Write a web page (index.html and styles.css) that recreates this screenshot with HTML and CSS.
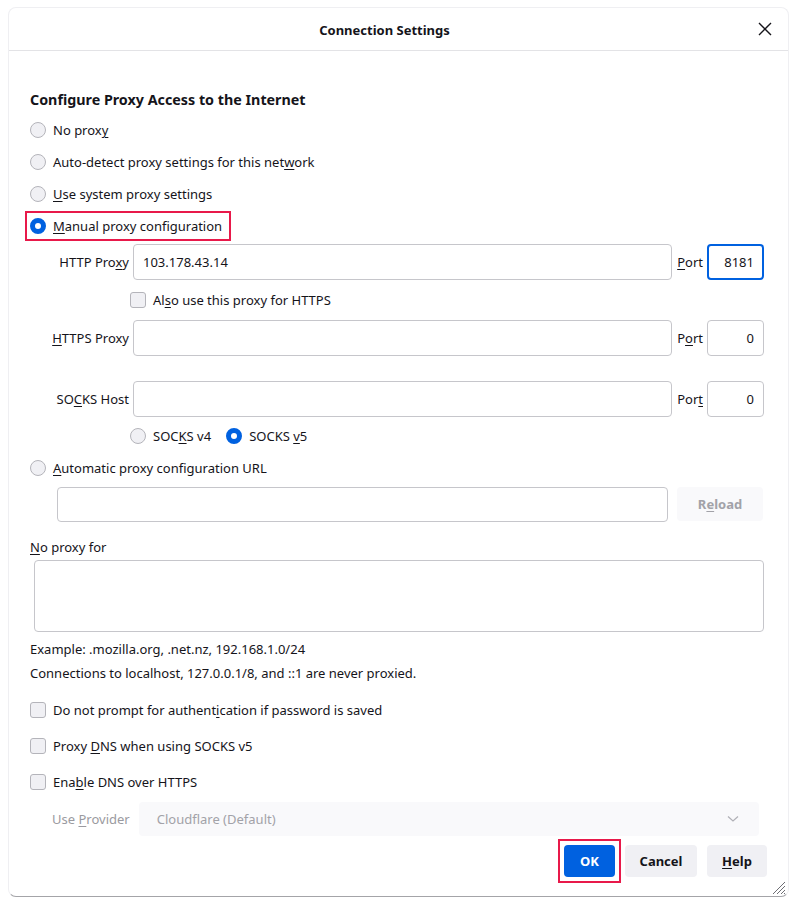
FILE: index.html
```html
<!DOCTYPE html>
<html lang="en">
<head>
    <meta charset="UTF-8">
    <meta name="viewport" content="width=device-width, initial-scale=1.0">
    <title>Connection Settings</title>
    <link rel="stylesheet" href="styles.css">
</head>
<body>

<div class="dialog">
    <!-- Title bar -->
    <div class="dialog-header">
        <div class="dialog-title">Connection Settings</div>
        <button class="close-button" aria-label="Close">
            <svg width="14" height="14" viewBox="0 0 14 14">
                <path d="M1 1L13 13M13 1L1 13" stroke="#15141a" stroke-width="1.4" fill="none"/>
            </svg>
        </button>
    </div>

    <div class="dialog-body">
        <h2>Configure Proxy Access to the Internet</h2>

        <div class="radio-list">
            <label class="option"><span class="radio"></span><span>No prox<u>y</u></span></label>
            <label class="option"><span class="radio"></span><span>Auto-detect proxy settings for this net<u>w</u>ork</span></label>
            <label class="option"><span class="radio"></span><span><u>U</u>se system proxy settings</span></label>
            <div class="option-row">
                <label class="option highlight"><span class="radio checked"></span><span><u>M</u>anual proxy configuration</span></label>
            </div>
        </div>

        <!-- Manual proxy fields -->
        <div class="proxy-grid">
            <label class="field-label">HTTP Pro<u>x</u>y</label>
            <input class="text-input" type="text" value="103.178.43.14">
            <label class="port-label"><u>P</u>ort</label>
            <input class="port-input focused" type="text" value="8181">

            <div class="check-cell">
                <label class="option"><span class="checkbox"></span><span>Al<u>s</u>o use this proxy for HTTPS</span></label>
            </div>

            <label class="field-label"><u>H</u>TTPS Proxy</label>
            <input class="text-input" type="text">
            <label class="port-label">P<u>o</u>rt</label>
            <input class="port-input" type="text" value="0">

            <div class="grid-spacer"></div>

            <label class="field-label">SO<u>C</u>KS Host</label>
            <input class="text-input" type="text">
            <label class="port-label">Por<u>t</u></label>
            <input class="port-input" type="text" value="0">

            <div class="socks-cell">
                <label class="option"><span class="radio"></span><span>SOC<u>K</u>S v4</span></label>
                <label class="option"><span class="radio checked"></span><span>SOCKS <u>v</u>5</span></label>
            </div>
        </div>

        <label class="option auto-option"><span class="radio"></span><span><u>A</u>utomatic proxy configuration URL</span></label>
        <div class="url-row">
            <input class="text-input" type="text">
            <button class="reload-button" disabled>R<u>e</u>load</button>
        </div>

        <div class="plain-line no-proxy-label"><u>N</u>o proxy for</div>
        <textarea class="no-proxy-area"></textarea>
        <div class="plain-line example">Example: .mozilla.org, .net.nz, 192.168.1.0/24</div>
        <div class="plain-line note">Connections to localhost, 127.0.0.1/8, and ::1 are never proxied.</div>

        <div class="check-list">
            <label class="option"><span class="checkbox"></span><span>Do not prompt for authent<u>i</u>cation if password is saved</span></label>
            <label class="option"><span class="checkbox"></span><span>Proxy <u>D</u>NS when using SOCKS v5</span></label>
            <label class="option"><span class="checkbox"></span><span>Ena<u>b</u>le DNS over HTTPS</span></label>
        </div>

        <div class="provider-row">
            <span class="provider-label">Use <u>P</u>rovider</span>
            <div class="select-box">
                <span>Cloudflare (Default)</span>
                <svg width="12" height="8" viewBox="0 0 12 8">
                    <path d="M1 1.5L6 6L11 1.5" stroke="#b0b0b6" stroke-width="1.2" fill="none"/>
                </svg>
            </div>
        </div>

        <div class="button-row">
            <div class="ok-wrap"><button class="btn primary">OK</button></div>
            <button class="btn cancel">Cancel</button>
            <button class="btn help"><u>H</u>elp</button>
        </div>
    </div>

    <svg class="grip" width="16" height="16" viewBox="0 0 16 16">
        <path d="M15 3L3 15M15 7L7 15M15 11L11 15M15 14L14 15" stroke="#6e6e74" stroke-width="1" fill="none"/>
    </svg>
</div>

</body>
</html>
```

FILE: styles.css
```css
body {
    font-family: "Noto Sans", "Open Sans", sans-serif;
    font-size: 13px;
    color: #15141a;
    background-color: #fff;
    margin: 0;
    padding: 0;
}
u {
    text-decoration-thickness: 1px;
    text-underline-offset: 2px;
}
.dialog {
    position: relative;
    width: 779px;
    height: 888px;
    margin: 7px 0 0 8px;
    border: 1px solid #efeff2;
    border-bottom-color: #a4a4a8;
    border-radius: 8px;
    display: flex;
    flex-direction: column;
}
.dialog-header {
    display: flex;
    align-items: center;
    height: 42px;
    border-bottom: 1px solid #e3e3e6;
}
.dialog-title {
    flex: 1;
    text-align: center;
    font-weight: bold;
    font-size: 13px;
    padding-left: 2px;
    padding-top: 2px;
}
.close-button {
    width: 30px;
    height: 30px;
    margin-right: 0;
    padding: 0;
    border: none;
    background: none;
    display: flex;
    align-items: center;
    justify-content: flex-start;
}
.dialog-body {
    padding: 0 24px 0 21px;
    display: flex;
    flex-direction: column;
}
h2 {
    font-size: 14.3px;
    font-weight: bold;
    margin: 38px 0 0 0;
    line-height: 22px;
}
.radio-list {
    display: flex;
    flex-direction: column;
    margin-top: 3px;
}
.option {
    display: inline-flex;
    align-items: center;
    gap: 7px;
    height: 32px;
    white-space: nowrap;
}
.option-row {
    height: 32px;
    display: flex;
    align-items: center;
}
.highlight {
    height: 26px;
    border: 2px solid #e8194a;
    margin-left: -5px;
    padding: 0 7px 0 3px;
}
.radio {
    width: 14px;
    height: 14px;
    border: 1px solid #b4b4ba;
    border-radius: 50%;
    background-color: #f0f0f4;
    flex: none;
}
.radio.checked {
    width: 6px;
    height: 6px;
    border: 5px solid #0061e0;
    background-color: #fff;
}
.checkbox {
    width: 14px;
    height: 14px;
    border: 1px solid #b4b4ba;
    border-radius: 3px;
    background-color: #f0f0f4;
    flex: none;
}
.proxy-grid {
    display: grid;
    grid-template-columns: 99px 1fr auto 57px;
    column-gap: 4px;
    align-items: center;
    margin-top: 2px;
}
.field-label {
    text-align: right;
    white-space: nowrap;
}
.port-label {
    padding-left: 1px;
}
.text-input, .port-input {
    height: 36px;
    box-sizing: border-box;
    border: 1px solid #c6c6cb;
    border-radius: 4px;
    font-family: inherit;
    font-size: 13px;
    color: #15141a;
    padding: 0 9px;
    background: #fff;
    width: 100%;
}
.port-input {
    text-align: right;
}
.port-input.focused {
    border: 2px solid #0061e0;
    padding: 0 8px;
}
.check-cell {
    grid-column: 2 / 5;
    height: 40px;
    display: flex;
    align-items: center;
    margin-left: -3px;
}
.grid-spacer {
    grid-column: 1 / 5;
    height: 25px;
}
.socks-cell {
    grid-column: 2 / 5;
    height: 38px;
    display: flex;
    align-items: center;
    gap: 15px;
    margin-left: -3px;
}
.auto-option {
    height: 26px;
}
.url-row {
    display: flex;
    gap: 9px;
    margin: 6px 1px 0 27px;
}
.url-row .text-input {
    flex: 1;
    height: 35px;
}
.reload-button {
    width: 86px;
    height: 34px;
    border: none;
    border-radius: 4px;
    background-color: #f9f9fb;
    color: #a2a2a8;
    font-family: inherit;
    font-size: 13px;
    font-weight: bold;
}
.plain-line {
    line-height: 20px;
}
.no-proxy-label {
    margin-top: 15px;
}
.no-proxy-area {
    margin: 3px 0 0 4px;
    height: 72px;
    box-sizing: border-box;
    border: 1px solid #c6c6cb;
    border-radius: 4px;
    resize: none;
}
.example {
    margin-top: 7px;
}
.note {
    margin-top: 4px;
}
.check-list {
    display: flex;
    flex-direction: column;
    margin-top: 9px;
}
.check-list .option {
    height: 36px;
}
.provider-row {
    display: flex;
    align-items: center;
    margin: 2px 0 0 22px;
    gap: 9px;
}
.provider-label {
    color: #9a9aa0;
    white-space: nowrap;
}
.select-box {
    flex: 1;
    height: 34px;
    margin-right: 5px;
    border-radius: 4px;
    background-color: #f9f9fb;
    color: #a2a2a8;
    display: flex;
    align-items: center;
    justify-content: space-between;
    padding: 0 20px 0 18px;
}
.button-row {
    display: flex;
    justify-content: flex-end;
    align-items: center;
    gap: 10px;
    margin-top: 3px;
    margin-right: -3px;
}
.ok-wrap {
    border: 2px solid #e8194a;
    padding: 4px;
    margin-right: -6px;
}
.btn {
    height: 32px;
    padding: 0;
    border: none;
    border-radius: 4px;
    background-color: #f0f0f4;
    color: #15141a;
    font-family: inherit;
    font-size: 13px;
    font-weight: bold;
    display: block;
}
.btn.primary {
    width: 51px;
    background-color: #0061e0;
    color: #fff;
}
.btn.cancel {
    width: 72px;
}
.btn.help {
    width: 60px;
}
.grip {
    position: absolute;
    right: 2px;
    bottom: 1px;
}
```
